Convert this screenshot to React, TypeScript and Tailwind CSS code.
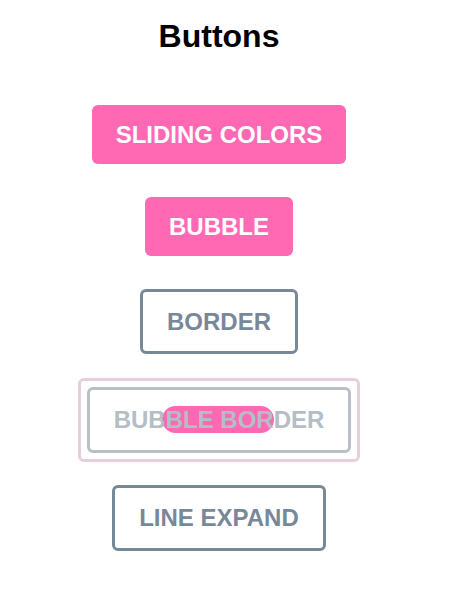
import React from 'react';

const App: React.FC = () => {
  return (
    <div className="min-h-screen bg-white">
      <div className="w-[438px] flex flex-col items-center pt-[18px] font-['Liberation_Sans',Arial,sans-serif]">
        <h1 className="text-[32px] leading-[37px] font-bold text-black">Buttons</h1>

        <button className="mt-[50px] bg-[#ff69b4] text-white text-[24px] leading-[27px] font-bold px-6 py-4 rounded-md">
          SLIDING COLORS
        </button>

        <button className="mt-[33px] bg-[#ff69b4] text-white text-[24px] leading-[27px] font-bold px-6 py-4 rounded-md">
          BUBBLE
        </button>

        <button className="mt-[33px] border-[3px] border-[#778899] text-[#778899] text-[24px] leading-[27px] font-bold px-6 py-4 rounded-md bg-white">
          BORDER
        </button>

        <div className="mt-[24px] border-[3px] border-[#e8cddb] rounded-md p-[6px]">
          <button className="relative border-[3px] border-[#b8bfc6] text-[#b5bdc6] text-[24px] leading-[28px] font-bold px-6 py-4 rounded-md bg-white">
            <span className="absolute left-[72px] top-[16px] w-[112px] h-[27px] rounded-full bg-[#ff69b4]"></span>
            <span className="relative">BUBBLE BORDER</span>
          </button>
        </div>

        <button className="mt-[23px] border-[3px] border-[#778899] text-[#778899] text-[24px] leading-[28px] font-bold px-6 py-4 rounded-md bg-white">
          LINE EXPAND
        </button>
      </div>
    </div>
  );
};

export default App;
